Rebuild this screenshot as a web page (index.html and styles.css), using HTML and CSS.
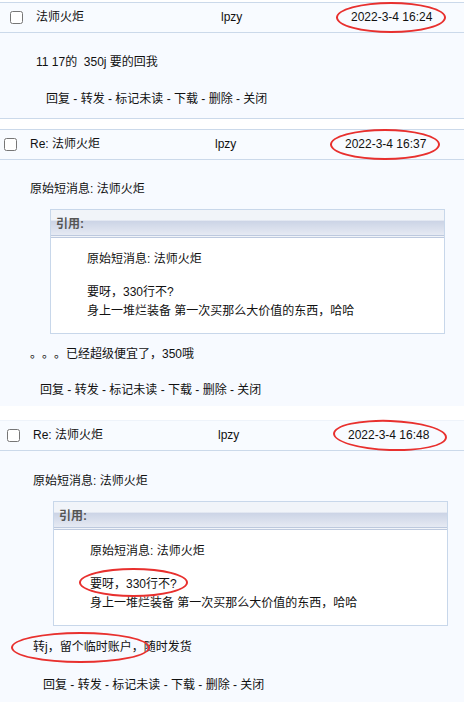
FILE: index.html
```html
<!DOCTYPE html>
<html lang="zh-CN">
<head>
<meta charset="UTF-8">
<meta name="viewport" content="width=device-width, initial-scale=1.0">
<title>短消息</title>
<link rel="stylesheet" href="styles.css">
</head>
<body>

<!-- message 1 -->
<div class="msg msg-first shift-6">
    <div class="msg-head">
        <input type="checkbox" class="check">
        <span class="subject">法师火炬</span>
        <span class="author">lpzy</span>
        <span class="date ringed">2022-3-4 16:24<span class="ring ring-date"></span></span>
    </div>
    <div class="msg-body">
        <p class="line">11 17的 &nbsp;350j 要的回我</p>
        <div class="actions">回复 - 转发 - 标记未读 - 下载 - 删除 - 关闭</div>
    </div>
</div>

<!-- message 2 -->
<div class="msg msg-second shift-0">
    <div class="msg-head">
        <input type="checkbox" class="check">
        <span class="subject">Re: 法师火炬</span>
        <span class="author">lpzy</span>
        <span class="date ringed">2022-3-4 16:37<span class="ring ring-date"></span></span>
    </div>
    <div class="msg-body">
        <p class="line">原始短消息: 法师火炬</p>
        <div class="quote">
            <div class="quote-head">引用:</div>
            <div class="quote-body">
                <p class="line">原始短消息: 法师火炬</p>
                <p class="line gap">要呀，330行不?</p>
                <p class="line">身上一堆烂装备 第一次买那么大价值的东西，哈哈</p>
            </div>
        </div>
        <p class="line after-quote">。。。已经超级便宜了，350哦</p>
        <div class="actions">回复 - 转发 - 标记未读 - 下载 - 删除 - 关闭</div>
    </div>
</div>

<!-- message 3 -->
<div class="msg msg-third shift-3">
    <div class="msg-head">
        <input type="checkbox" class="check">
        <span class="subject">Re: 法师火炬</span>
        <span class="author">lpzy</span>
        <span class="date ringed">2022-3-4 16:48<span class="ring ring-date tilt"></span></span>
    </div>
    <div class="msg-body">
        <p class="line">原始短消息: 法师火炬</p>
        <div class="quote">
            <div class="quote-head">引用:</div>
            <div class="quote-body">
                <p class="line">原始短消息: 法师火炬</p>
                <p class="line gap"><span class="ringed">要呀，330行不?<span class="ring ring-ask"></span></span></p>
                <p class="line">身上一堆烂装备 第一次买那么大价值的东西，哈哈</p>
            </div>
        </div>
        <p class="line after-quote"><span class="ringed">转j，留个临时账户，<span class="ring ring-pay"></span></span>随时发货</p>
        <div class="actions">回复 - 转发 - 标记未读 - 下载 - 删除 - 关闭</div>
    </div>
</div>

</body>
</html>
```

FILE: styles.css
```css
body {
    margin: 0;
    padding: 0;
    background-color: #fff;
    font-family: "Liberation Sans", "Noto Sans CJK SC", sans-serif;
    font-size: 12px;
    color: #111;
    text-spacing-trim: space-all;
}
p {
    margin: 0;
}
.msg {
    background-color: #f7faff;
    border-top: 1px solid #cbd9ea;
}
.msg-first {
    margin-top: 2px;
    border-bottom: 1px solid #cbd9ea;
}
.msg-second {
    margin-top: 10px;
}
.msg-third {
    margin-top: 14px;
    border-top-color: #eef3fa;
}

/* screenshots were stitched with small horizontal offsets */
.shift-0 { --shift: 4px; }
.shift-3 { --shift: 7px; }
.shift-6 { --shift: 10px; }

.msg-head {
    display: grid;
    grid-template-columns: 26px 185px 130px auto;
    align-items: center;
    height: 29px;
    padding-left: var(--shift);
    border-bottom: 1px solid #cbd9ea;
    background-color: #f8fbff;
}
.check {
    width: 13px;
    height: 13px;
    margin: 0;
}
.subject, .author, .date {
    line-height: 19px;
}
.date {
    justify-self: start;
}
.msg-body {
    padding: 20px 0 6px calc(var(--shift) + 26px);
}
.msg-first .msg-body {
    padding-bottom: 9px;
}
.msg-third .msg-body {
    padding-top: 21px;
    padding-bottom: 7px;
}
.line {
    line-height: 19px;
}
.actions {
    line-height: 19px;
    margin-top: 17px;
    padding-left: 10px;
}
.msg-first .actions {
    margin-top: 18px;
}
.msg-third .actions {
    margin-top: 19px;
}

/* quote box */
.quote {
    width: 393px;
    margin: 10px 0 0 20px;
    border: 1px solid #c8d7ea;
    background-color: #fff;
}
.quote-head {
    height: 28px;
    padding: 5px 0 0 5px;
    box-sizing: border-box;
    font-weight: bold;
    color: #555;
    line-height: 19px;
    background: linear-gradient(#f1f4f9 0, #f1f4f9 40%, #ccd4e6 45%, #e6eaf3 100%);
    border-bottom: 3px double #bdc9de;
}
.quote-body {
    padding: 12px 0 12px 36px;
}
.quote-body .gap {
    margin-top: 14px;
}
.after-quote {
    margin-top: 11px;
}
.msg-third .after-quote {
    margin-top: 12px;
}

/* red hand-drawn marks over the screenshot */
.ringed {
    position: relative;
}
.ring {
    position: absolute;
    border: 2px solid #e8302e;
    border-radius: 50%;
    pointer-events: none;
}
.ring-date {
    left: -15px;
    right: -14px;
    top: -6px;
    bottom: -6px;
}
.ring-date.tilt {
    right: -18px;
    transform: rotate(2deg);
}
.ring-ask {
    left: -11px;
    right: -11px;
    top: -9px;
    bottom: -6px;
}
.ring-pay {
    left: -22px;
    right: -6px;
    top: -8px;
    bottom: -9px;
}
```
